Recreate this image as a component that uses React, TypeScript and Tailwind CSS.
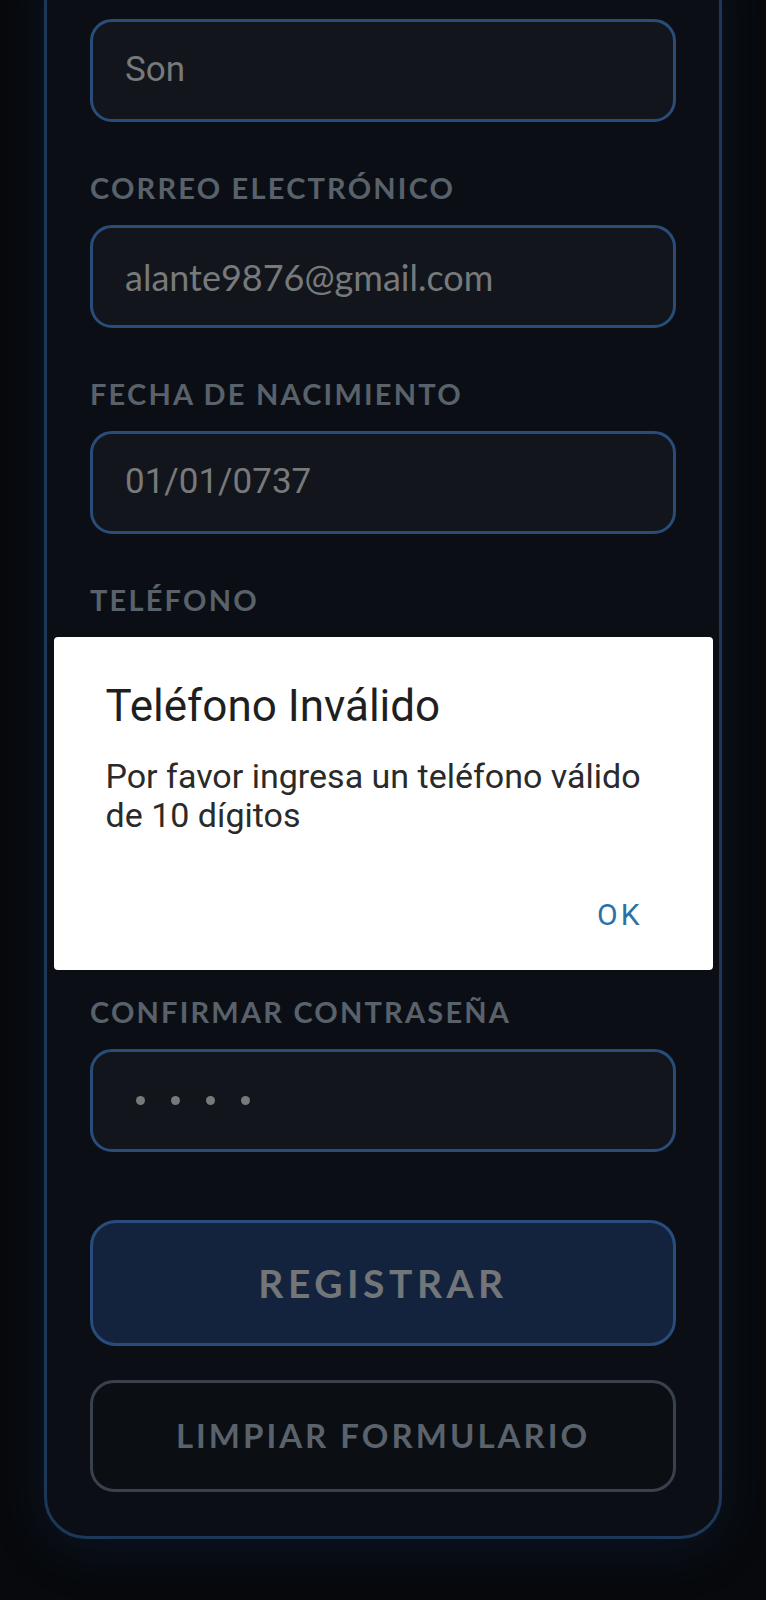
import { useState } from 'react';

const fields = [
  { label: 'CORREO ELECTRÓNICO', value: 'alante9876@gmail.com', font: 'lato' },
  { label: 'FECHA DE NACIMIENTO', value: '01/01/0737', font: 'roboto' },
  { label: 'TELÉFONO', value: '', font: 'roboto' },
  { label: 'CONTRASEÑA', value: '••••', font: 'dots' },
  { label: 'CONFIRMAR CONTRASEÑA', value: '••••', font: 'dots' },
];

function FieldBox({ value, font }: { value: string; font: string }) {
  return (
    <div className="h-[103px] rounded-[22px] border-[3px] border-[#2a4c79] bg-[#12161c] flex items-center px-[32px]">
      {font === 'dots' ? (
        <div className="flex items-center gap-[26px] pl-[11px]">
          {[0, 1, 2, 3].map((i) => (
            <span key={i} className="block w-[9px] h-[9px] rounded-full bg-[#77797b]"></span>
          ))}
        </div>
      ) : (
        <span
          className={`text-[#77797b] ${
            font === 'lato'
              ? "font-['Lato',sans-serif] text-[36px]"
              : "font-['Roboto',sans-serif] text-[35px]"
          }`}
        >
          {value}
        </span>
      )}
    </div>
  );
}

export default function App() {
  const [showAlert, setShowAlert] = useState(true);

  return (
    <div className="min-h-[1600px] bg-[#07090c] relative overflow-hidden font-['Lato',sans-serif]">
      {/* Form card, scrolled so its top is out of view */}
      <div className="mx-[44px] -mt-[60px] rounded-[42px] border-[3px] border-[#1d3758] bg-[#0b0f15] shadow-[0_10px_50px_rgba(25,55,100,0.28)] px-[43px] pt-[76px] pb-[44px]">
        <FieldBox value="Son" font="roboto" />

        {fields.map((f) => (
          <div key={f.label} className="mt-[49px]">
            <div className="h-[34px] leading-[34px] text-[29px] font-bold tracking-[2.2px] text-[#59616b] mb-[20px]">
              {f.label}
            </div>
            <FieldBox value={f.value} font={f.font} />
          </div>
        ))}

        {/* Actions */}
        <button className="mt-[68px] w-full h-[126px] rounded-[26px] border-[3px] border-[#294c7d] bg-[#13233e] text-[#737679] text-[39px] font-bold tracking-[4.5px]">
          REGISTRAR
        </button>
        <button className="mt-[34px] w-full h-[112px] rounded-[24px] border-[3px] border-[#39414c] bg-[#0b0f14] text-[#5a626c] text-[33px] font-bold tracking-[3px]">
          LIMPIAR FORMULARIO
        </button>
      </div>

      {/* Alert dialog */}
      {showAlert && (
        <div className="fixed inset-0 flex items-center justify-center">
          <div className="mt-[7px] w-[659px] h-[333px] bg-white rounded-[4px] pl-[52px] pr-[48px] pt-[44px] flex flex-col font-['Roboto',sans-serif]">
            <h2 className="text-[44px] leading-[50px] text-[#1f1f1f]">Teléfono Inválido</h2>
            <p className="mt-[26px] text-[34px] leading-[39px] text-[#2a2a2a]">
              Por favor ingresa un teléfono válido de 10 dígitos
            </p>
            <div className="mt-auto mb-[33px] pr-[22px] flex justify-end">
              <button
                onClick={() => setShowAlert(false)}
                className="text-[30px] tracking-[3px] text-[#2c70a8]"
              >
                OK
              </button>
            </div>
          </div>
        </div>
      )}
    </div>
  );
}
